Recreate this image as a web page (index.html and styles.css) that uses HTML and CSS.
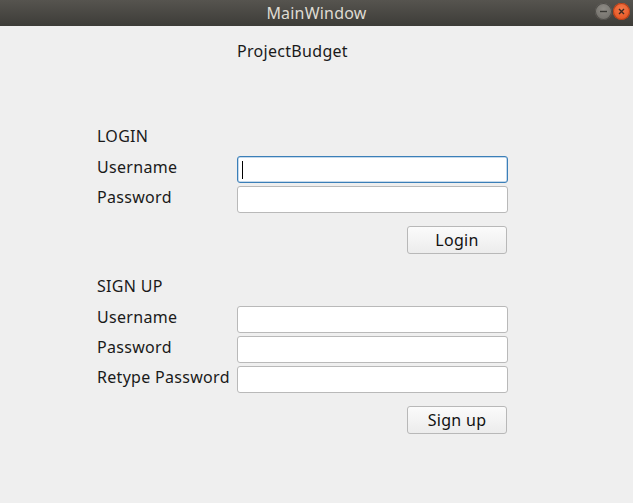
FILE: index.html
```html
<!DOCTYPE html>
<html>
<head>
<meta charset="utf-8">
<link rel="stylesheet" href="styles.css">
</head>
<body>
<div class="window">
  <div class="titlebar">
    <span class="title">MainWindow</span>
    <div class="controls">
      <span class="ctl min"><svg width="17" height="17" viewBox="0 0 17 17"><line x1="5" y1="8.5" x2="12" y2="8.5" stroke="#3a3935" stroke-width="1.4"/></svg></span>
      <span class="ctl close"><svg width="17" height="17" viewBox="0 0 17 17"><path d="M6 6 L11 11 M11 6 L6 11" stroke="#3a2a22" stroke-width="1.4"/></svg></span>
    </div>
  </div>
  <div class="content">
    <div class="form">
      <div class="app-title">ProjectBudget</div>

      <div class="section-title login-title">LOGIN</div>
      <div class="rows">
        <div class="row"><span class="label">Username</span><div class="input focused"><span class="caret"></span></div></div>
        <div class="row"><span class="label">Password</span><div class="input"></div></div>
      </div>
      <div class="actions"><div class="button">Login</div></div>

      <div class="section-title signup-title">SIGN UP</div>
      <div class="rows">
        <div class="row"><span class="label">Username</span><div class="input"></div></div>
        <div class="row"><span class="label">Password</span><div class="input"></div></div>
        <div class="row"><span class="label">Retype Password</span><div class="input"></div></div>
      </div>
      <div class="actions"><div class="button">Sign up</div></div>
    </div>
  </div>
</div>
</body>
</html>
```

FILE: styles.css
```css
html, body {
  margin: 0;
  padding: 0;
  background: #efefef;
}
body {
  font-family: "Noto Sans", "DejaVu Sans", sans-serif;
  font-size: 16px;
  letter-spacing: 0.3px;
  color: #1a1a1a;
}
.window {
  width: 633px;
  height: 503px;
  display: flex;
  flex-direction: column;
}
.titlebar {
  height: 26px;
  flex: none;
  background: linear-gradient(#56544f, #3d3c38);
  display: flex;
  align-items: center;
  justify-content: center;
  position: relative;
}
.title {
  color: #dfdbd2;
  font-size: 16px;
  line-height: 20px;
  letter-spacing: 0.2px;
}
.controls {
  position: absolute;
  right: 3px;
  top: 3px;
  display: flex;
  gap: 1px;
}
.ctl {
  width: 17px;
  height: 17px;
  border-radius: 50%;
  display: block;
}
.ctl svg { display: block; }
.min {
  background: radial-gradient(circle at 50% 35%, #8f8c86, #6a6863);
  box-shadow: inset 0 0 0 1px #4f4d49;
}
.close {
  background: radial-gradient(circle at 50% 35%, #f5794a, #df4b17);
  box-shadow: inset 0 0 0 1px #b5401a;
}
.content {
  flex: 1;
  background: #efefef;
}
.form {
  margin-left: 97px;
  width: 411px;
  display: flex;
  flex-direction: column;
}
.app-title {
  margin-top: 15px;
  margin-left: 140px;
  line-height: 20px;
}
.section-title {
  line-height: 20px;
  margin-bottom: 10px;
}
.login-title { margin-top: 65px; }
.signup-title { margin-top: 22px; margin-bottom: 10px; }
.rows {
  display: flex;
  flex-direction: column;
  gap: 3px;
}
.row {
  display: flex;
  align-items: flex-start;
}
.label {
  width: 140px;
  flex: none;
  line-height: 20px;
  padding-top: 1px;
  white-space: nowrap;
}
.input {
  width: 271px;
  height: 27px;
  box-sizing: border-box;
  background: #ffffff;
  border: 1px solid #b9b9b9;
  border-radius: 3px;
  position: relative;
}
.input.focused {
  border-color: #3b7fb8;
  box-shadow: inset 0 0 0 0.5px #8bb3d8;
}
.caret {
  position: absolute;
  left: 4px;
  top: 4px;
  width: 1px;
  height: 18px;
  background: #000;
}
.actions {
  display: flex;
  justify-content: flex-end;
  margin-top: 13px;
  padding-right: 1px;
}
.button {
  width: 100px;
  height: 28px;
  box-sizing: border-box;
  border: 1px solid #b8b8b8;
  border-radius: 3px;
  background: linear-gradient(#fbfbfb, #ececec);
  display: flex;
  align-items: center;
  justify-content: center;
  line-height: 20px;
  color: #111;
}
```
